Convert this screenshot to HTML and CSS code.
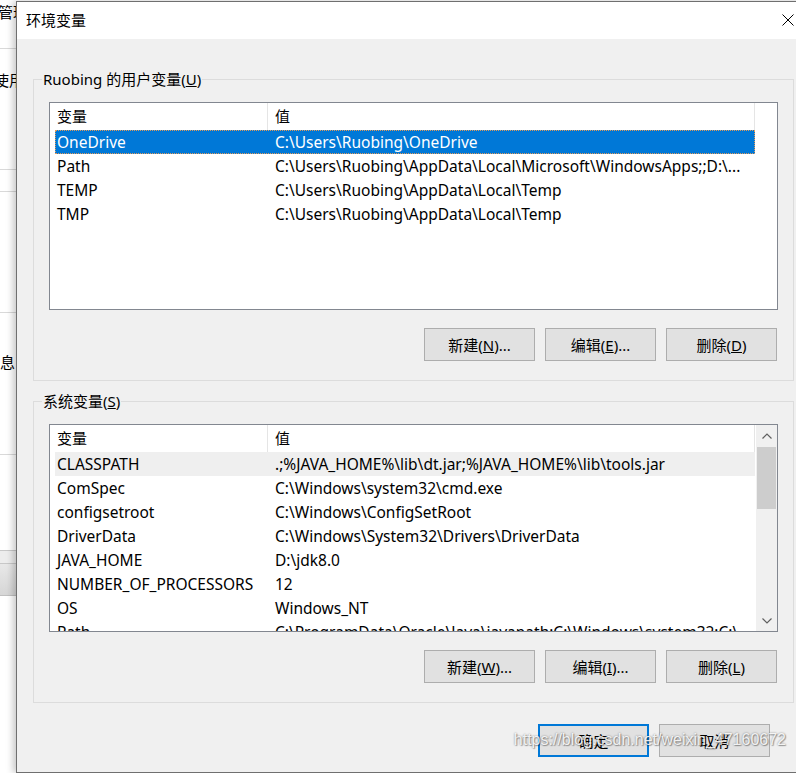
FILE: index.html
```html
<!DOCTYPE html>
<html lang="zh-CN">
<head>
    <meta charset="UTF-8">
    <meta name="viewport" content="width=device-width, initial-scale=1.0">
    <title>环境变量</title>
    <link rel="stylesheet" href="styles.css">
</head>
<body>

    <div class="desktop">
        <!-- the window behind the dialog, only a sliver shows -->
        <div class="behind">
            <div class="behind-cell c1"><span>管理</span></div>
            <div class="behind-cell c2"><span>使用</span></div>
            <div class="behind-cell c3"></div>
            <div class="behind-cell c4"></div>
            <div class="behind-cell c5"><span>信息</span></div>
            <div class="behind-cell c6"></div>
            <div class="behind-cell c7"></div>
            <div class="behind-cell c8"></div>
        </div>

        <div class="dialog">
            <div class="titlebar">
                <span class="title">环境变量</span>
                <svg class="close" width="12" height="12" viewBox="0 0 12 12">
                    <path d="M0.5 0.5 L11.5 11.5 M11.5 0.5 L0.5 11.5" stroke="#000" stroke-width="1" fill="none"/>
                </svg>
            </div>

            <div class="dialog-body">
                <fieldset class="group">
                    <legend>Ruobing 的用户变量(<u>U</u>)</legend>
                    <div class="list">
                        <div class="list-body">
                            <div class="list-head">
                                <div class="col name">变量</div>
                                <div class="col value">值</div>
                            </div>
                            <div class="row selected"><div class="col name">OneDrive</div><div class="col value">C:\Users\Ruobing\OneDrive</div></div>
                            <div class="row"><div class="col name">Path</div><div class="col value">C:\Users\Ruobing\AppData\Local\Microsoft\WindowsApps;;D:\...</div></div>
                            <div class="row"><div class="col name">TEMP</div><div class="col value">C:\Users\Ruobing\AppData\Local\Temp</div></div>
                            <div class="row"><div class="col name">TMP</div><div class="col value">C:\Users\Ruobing\AppData\Local\Temp</div></div>
                        </div>
                        <div class="no-scroll"></div>
                    </div>
                    <div class="btn-row">
                        <button>新建(<u>N</u>)...</button>
                        <button>编辑(<u>E</u>)...</button>
                        <button>删除(<u>D</u>)</button>
                    </div>
                </fieldset>

                <fieldset class="group second">
                    <legend>系统变量(<u>S</u>)</legend>
                    <div class="list">
                        <div class="list-body">
                            <div class="list-head">
                                <div class="col name">变量</div>
                                <div class="col value">值</div>
                            </div>
                            <div class="row hover"><div class="col name">CLASSPATH</div><div class="col value">.;%JAVA_HOME%\lib\dt.jar;%JAVA_HOME%\lib\tools.jar</div></div>
                            <div class="row"><div class="col name">ComSpec</div><div class="col value">C:\Windows\system32\cmd.exe</div></div>
                            <div class="row"><div class="col name">configsetroot</div><div class="col value">C:\Windows\ConfigSetRoot</div></div>
                            <div class="row"><div class="col name">DriverData</div><div class="col value">C:\Windows\System32\Drivers\DriverData</div></div>
                            <div class="row"><div class="col name">JAVA_HOME</div><div class="col value">D:\jdk8.0</div></div>
                            <div class="row"><div class="col name">NUMBER_OF_PROCESSORS</div><div class="col value">12</div></div>
                            <div class="row"><div class="col name">OS</div><div class="col value">Windows_NT</div></div>
                            <div class="row"><div class="col name">Path</div><div class="col value">C:\ProgramData\Oracle\Java\javapath;C:\Windows\system32;C:\...</div></div>
                        </div>
                        <div class="scrollbar">
                            <div class="arrow">
                                <svg width="10" height="6" viewBox="0 0 10 6"><path d="M0.5 5.5 L5 1 L9.5 5.5" stroke="#606060" stroke-width="1.2" fill="none"/></svg>
                            </div>
                            <div class="track">
                                <div class="thumb"></div>
                            </div>
                            <div class="arrow">
                                <svg width="10" height="6" viewBox="0 0 10 6"><path d="M0.5 0.5 L5 5 L9.5 0.5" stroke="#606060" stroke-width="1.2" fill="none"/></svg>
                            </div>
                        </div>
                    </div>
                    <div class="btn-row">
                        <button>新建(<u>W</u>)...</button>
                        <button>编辑(<u>I</u>)...</button>
                        <button>删除(<u>L</u>)</button>
                    </div>
                </fieldset>

                <div class="dialog-buttons">
                    <button class="default">确定</button>
                    <button>取消</button>
                </div>
            </div>
        </div>

        <div class="watermark">https://blog.csdn.net/weixin_47160672</div>
    </div>

</body>
</html>
```

FILE: styles.css
```css
* { margin: 0; padding: 0; box-sizing: border-box; }
body {
    font-family: "Noto Sans", "Noto Sans CJK SC", sans-serif;
    font-size: 15px;
    color: #000;
    background: #fff;
    overflow: hidden;
    height: 773px;
}
.desktop {
    position: relative;
    display: flex;
    height: 773px;
    overflow: hidden;
}

/* window behind */
.behind {
    width: 16px;
    flex-shrink: 0;
    overflow: hidden;
    display: flex;
    flex-direction: column;
    background: #fff;
    font-size: 15px;
}
.behind-cell {
    border-bottom: 1px solid #d9d9d9;
    white-space: nowrap;
}
.behind-cell span { display: block; margin-left: -2px; }
.c1 { height: 49px; padding-top: 1px; }
.c2 { height: 121px; padding-top: 20px; }
.c2 span { margin-left: -6px; }
.c3 { height: 22px; }
.c4 { height: 121px; }
.c5 { height: 142px; padding-top: 38px; }
.c5 span { margin-left: -15px; }
.c6 { height: 96px; border-bottom-color: #c8c8c8; }
.c7 { height: 13px; background: #ededed; border-bottom-color: #c8c8c8; }
.c8 { height: 32px; background: linear-gradient(#e8e8e8, #d6d6d6); border-bottom-color: #c0c0c0; }

/* dialog */
.dialog {
    width: 790px;
    flex-shrink: 0;
    margin-top: 1px;
    background: #f0f0f0;
    border: 1px solid #6f6f6f;
    box-shadow: -3px 0 7px rgba(0, 0, 0, 0.22);
}
.titlebar {
    height: 37px;
    background: #fff;
    display: flex;
    align-items: center;
    justify-content: space-between;
    padding: 0 11px 2px 9px;
}
.title { font-size: 15px; }
.close { margin-top: 1px; }

.dialog-body { padding-left: 16px; }

.group {
    width: 761px;
    border: 1px solid #dcdcdc;
    padding: 0 0 19px 0;
    margin-top: 31px;
}
.group.second { margin-top: 11px; }
.group legend {
    margin-left: 8px;
    padding: 0 1px;
    line-height: 18px;
}

.list {
    width: 729px;
    height: 208px;
    margin: 14px 0 0 15px;
    background: #fff;
    border: 1px solid #828790;
    display: flex;
    overflow: hidden;
    font-size: 15.5px;
}
.list-body {
    flex: 1;
    padding-left: 5px;
    overflow: hidden;
}
.no-scroll, .scrollbar { width: 21px; flex-shrink: 0; }

.list-head, .row {
    display: flex;
    width: 700px;
    white-space: nowrap;
}
.list-head { height: 27px; align-items: center; font-size: 15px; }
.list-head .col { height: 27px; line-height: 27px; border-right: 1px solid #e5e5e5; }
.row { height: 24px; line-height: 24px; }
.col { overflow: hidden; text-overflow: ellipsis; }
.col.name { width: 213px; padding-left: 2px; }
.col.value { width: 487px; padding-left: 7px; }
.row.selected {
    background: #0078d7;
    color: #fff;
    outline: 1px dotted #e09a5a;
    outline-offset: -1px;
}
.row.hover { background: #efefef; }

.scrollbar {
    background: #f0f0f0;
    display: flex;
    flex-direction: column;
}
.arrow {
    height: 21px;
    display: flex;
    align-items: center;
    justify-content: center;
}
.track { flex: 1; padding: 1px 1px 0 1px; }
.thumb { height: 62px; background: #cdcdcd; }

.btn-row {
    display: flex;
    justify-content: flex-end;
    gap: 10px;
    margin-top: 18px;
    padding-right: 16px;
}
button {
    width: 111px;
    height: 33px;
    background: #e1e1e1;
    border: 1px solid #adadad;
    font-family: inherit;
    font-size: 15px;
    color: #000;
}
button.default { border: 2px solid #0078d7; }

.dialog-buttons {
    width: 761px;
    display: flex;
    justify-content: flex-end;
    gap: 10px;
    margin-top: 21px;
    padding-right: 24px;
}

.watermark {
    position: absolute;
    right: 10px;
    top: 731px;
    font-family: "Liberation Sans", Arial, sans-serif;
    font-size: 16px;
    color: rgba(255, 255, 255, 0.88);
    text-shadow: 0 0 2px rgba(0, 0, 0, 0.45), 1px 1px 1px rgba(0, 0, 0, 0.3);
}
```
